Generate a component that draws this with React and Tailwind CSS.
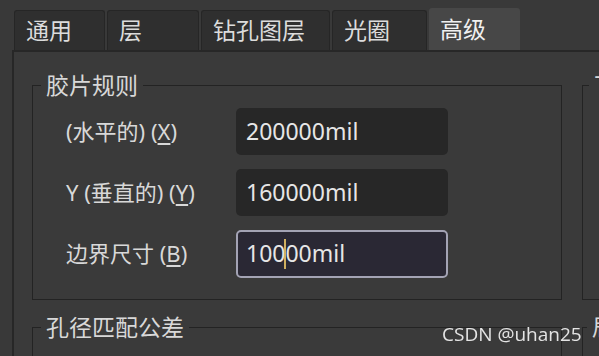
import React from 'react';

const tabs = [
  { label: '通用', w: 'w-[91px]' },
  { label: '层', w: 'w-[92px]' },
  { label: '钻孔图层', w: 'w-[129px]' },
  { label: '光圈', w: 'w-[95px]' },
  { label: '高级', w: 'w-[91px]', active: true },
];

const rows = [
  { pre: '(水平的) (', key: 'X', value: '200000mil' },
  { pre: 'Y (垂直的) (', key: 'Y', value: '160000mil' },
  { pre: '边界尺寸 (', key: 'B', value: '10000mil', focus: true },
];

function Field({ pre, hotkey, value, focus }) {
  return (
    <div className="flex items-center h-[61px]">
      <span className="w-[203px] pl-[33px] text-[22px] text-[#d8d8d8] whitespace-nowrap">
        {pre}
        <span className="underline underline-offset-[3px]">{hotkey}</span>)
      </span>
      {focus ? (
        <div className="w-[212px] h-[48px] rounded-[5px] border-2 border-[#a3a3b4] bg-[#2a2834] flex items-center pl-[8px] text-[23px] text-[#e6e6e6]">
          100<span className="inline-block w-[2px] h-[30px] bg-[#d0b060] mx-[-1px]" />00mil
        </div>
      ) : (
        <div className="w-[212px] h-[47px] rounded-[5px] bg-[#272727] flex items-center pl-[10px] text-[23px] text-[#e6e6e6]">
          {value}
        </div>
      )}
    </div>
  );
}

export default function App() {
  return (
    <div
      className="w-[599px] h-[356px] overflow-hidden bg-[#393939] flex flex-col"
      style={{ fontFamily: '"Noto Sans", "Noto Sans CJK SC", sans-serif' }}
    >
      {/* tab strip */}
      <div className="flex items-end h-[50px] pl-[14px] gap-[2px] shrink-0">
        {tabs.map((t) => (
          <div
            key={t.label}
            className={`${t.w} ${
              t.active ? 'h-[42px] bg-[#474747] text-[#f0f0f0]' : 'h-[40px] bg-[#2f2f2f] text-[#dcdcdc] border border-b-0 border-[#262626]'
            } rounded-t-[3px] flex items-center pl-[11px] text-[23px] leading-none`}
          >
            {t.label}
          </div>
        ))}
      </div>

      {/* tab pane */}
      <div className="flex-1 ml-[12px] border-l-2 border-t-2 border-[#272727] bg-[#3a3a3a] pl-[18px] pt-[18px] flex gap-[20px] overflow-hidden">
        <div className="w-[530px] shrink-0 flex flex-col gap-[12px]">
          <fieldset className="shrink-0 border border-[#232323] h-[230px] pt-[1px]">
            <legend className="ml-[8px] px-[5px] text-[23px] text-[#d8d8d8] leading-[30px]">胶片规则</legend>
            <div className="flex flex-col">
              {rows.map((r) => (
                <Field key={r.key} pre={r.pre} hotkey={r.key} value={r.value} focus={r.focus} />
              ))}
            </div>
          </fieldset>
          <fieldset className="shrink-0 border border-[#232323] h-[80px]">
            <legend className="ml-[8px] px-[5px] text-[23px] text-[#d8d8d8] leading-[30px]">孔径匹配公差</legend>
          </fieldset>
        </div>
        <div className="w-[120px] shrink-0 flex flex-col gap-[12px]">
          <fieldset className="shrink-0 border border-[#232323] h-[230px]">
            <legend className="ml-[6px] px-[5px] text-[23px] text-[#d8d8d8] leading-[30px]">下载</legend>
          </fieldset>
          <fieldset className="shrink-0 border border-[#232323] h-[80px]">
            <legend className="ml-[4px] px-[5px] text-[23px] text-[#d8d8d8] leading-[30px]">局部</legend>
          </fieldset>
        </div>
      </div>

      <div className="fixed left-[442px] top-[325px] text-[19px] text-[#e4e4e4] leading-none" style={{ fontFamily: '"Open Sans", sans-serif' }}>
        CSDN @uhan25
      </div>
    </div>
  );
}
